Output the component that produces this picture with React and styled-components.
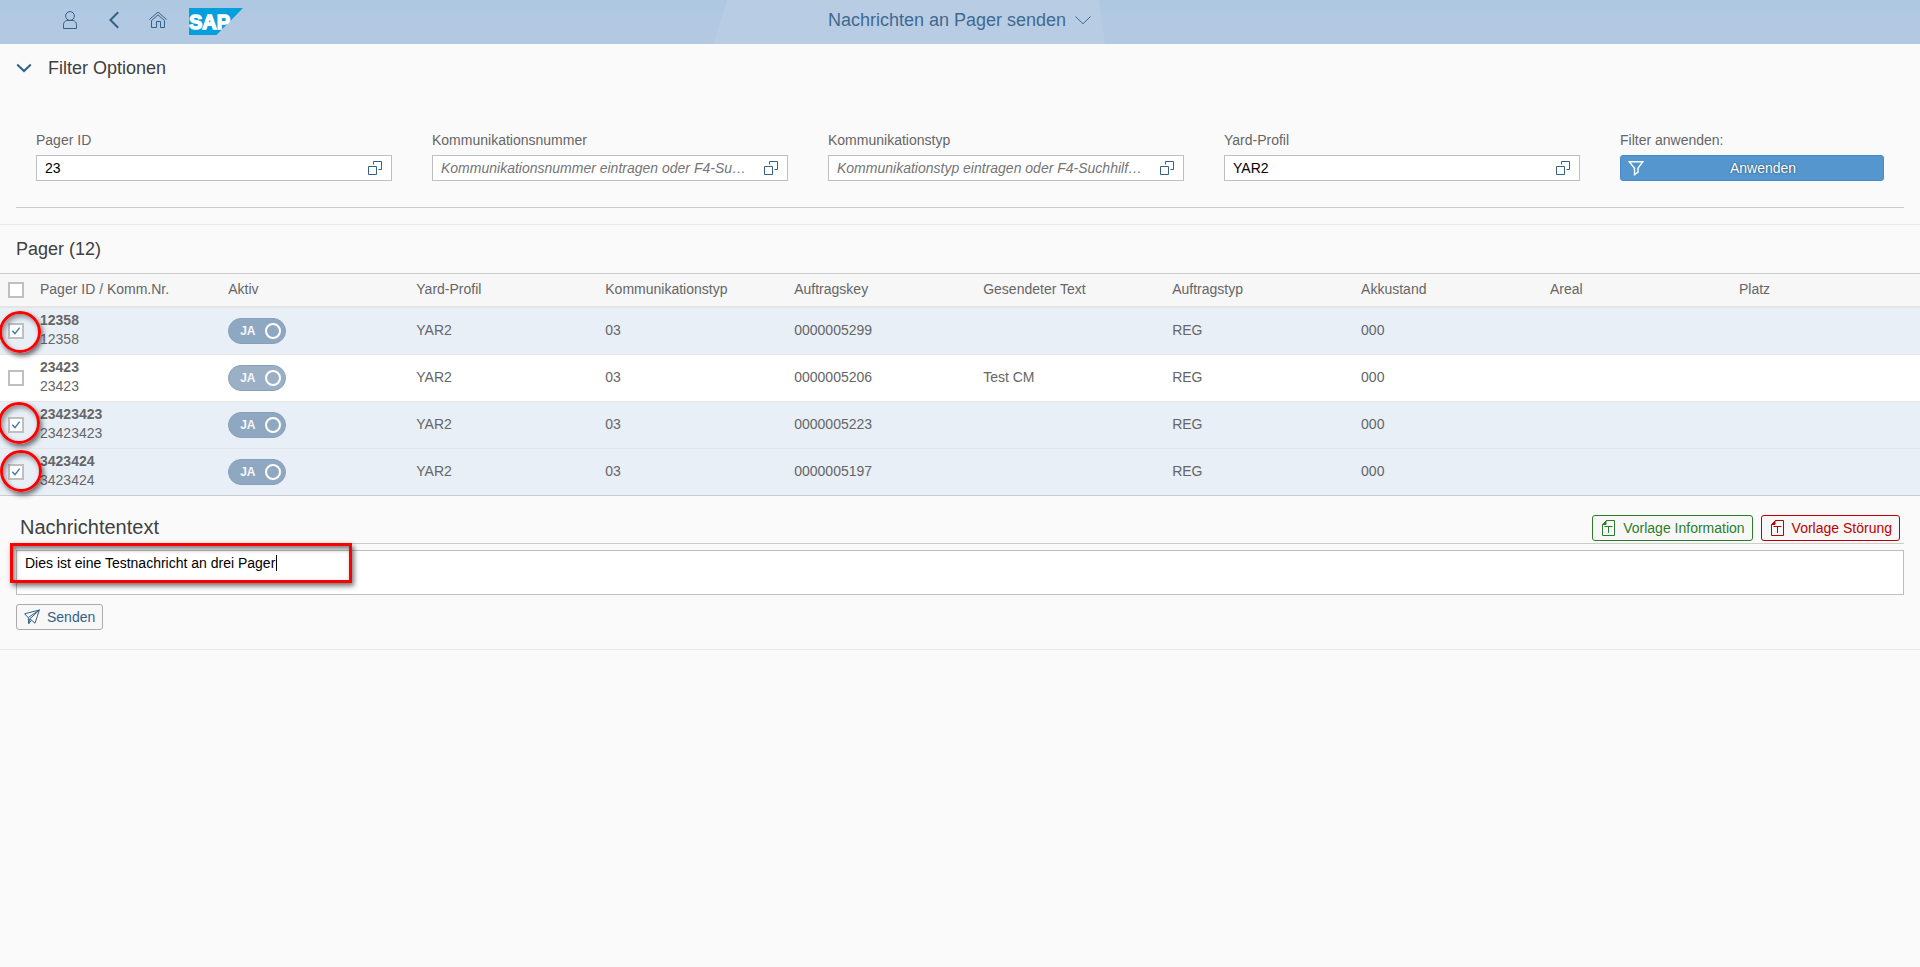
import React, { useState } from "react";
import styled, { createGlobalStyle } from "styled-components";

const GlobalStyle = createGlobalStyle`
  *, *::before, *::after { box-sizing: border-box; }
  html, body { margin: 0; background: #fafafa; }
  body { overflow-x: hidden; }
  body, button, input, textarea {
    font-family: "Liberation Sans", Arial, Helvetica, sans-serif;
    font-size: 14px;
  }
  h1, h2 { margin: 0; font-weight: 400; }
`;

const Page = styled.div`
  color: #666;
`;

/* ---------- shell bar ---------- */
const ShellBar = styled.header`
  position: relative;
  display: grid;
  grid-template-columns: 1fr auto 1fr;
  align-items: center;
  height: 44px;
  padding: 0 48px;
  background: linear-gradient(#aec8e2, #b3c9e2 60%);
`;

const ShellAccent = styled.div`
  position: absolute;
  top: 0;
  bottom: 0;
  left: 37.15%;
  width: 20.4%;
  background: #b8cde4;
  clip-path: polygon(14px 0, calc(100% - 6px) 0, 100% 100%, 0 100%);
`;

const ShellActions = styled.nav`
  display: flex;
  align-items: center;
`;

const ShellButton = styled.button`
  display: flex;
  align-items: center;
  justify-content: center;
  width: 44px;
  height: 44px;
  padding: 0 0 4px;
  border: 0;
  background: none;
  color: #346187;
`;

const LogoLink = styled.a`
  display: flex;
  margin: 0 0 1px 8px;
`;

const AppTitle = styled.button`
  position: relative;
  display: flex;
  align-items: center;
  gap: 8px;
  height: 44px;
  padding: 0 0 4px;
  border: 0;
  background: none;
  color: #3f6991;
`;

const AppTitleText = styled.h1`
  font-size: 18px;
  line-height: 24px;
`;

/* ---------- filter panel ---------- */
const FilterPanel = styled.section`
  padding-bottom: 16px;
  border-bottom: 1px solid #e8e8e8;
`;

const PanelHeader = styled.div`
  display: flex;
  align-items: center;
  height: 48px;
`;

const ExpandButton = styled.button`
  display: flex;
  align-items: center;
  justify-content: center;
  width: 48px;
  height: 48px;
  padding: 0;
  border: 0;
  background: none;
  color: #346187;
`;

const SectionTitle = styled.h2`
  font-size: ${(p) => (p.$large ? "20px" : "18px")};
  line-height: ${(p) => (p.$large ? "28px" : "24px")};
  color: #404040;
`;

const FilterGrid = styled.div`
  display: grid;
  grid-template-columns: repeat(4, minmax(0, 89fr)) minmax(0, 66fr);
  column-gap: 40px;
  margin: 0 16px;
  padding: 38px 20px 26px;
  border-bottom: 1px solid #ccc;
`;

const Field = styled.div`
  display: flex;
  flex-direction: column;
  gap: 5px;
`;

const FieldLabel = styled.label`
  line-height: 20px;
`;

const InputBox = styled.div`
  display: flex;
  height: 26px;
  border: 1px solid #bfbfbf;
  background: #fff;
`;

const TextInput = styled.input`
  flex: 1;
  min-width: 0;
  padding: 0 8px;
  border: 0;
  outline: 0;
  background: none;
  color: #000;
  text-overflow: ellipsis;

  &::placeholder {
    color: #757575;
    font-style: italic;
    opacity: 1;
  }
`;

const ValueHelpButton = styled.button`
  display: flex;
  align-items: center;
  justify-content: center;
  width: 32px;
  padding: 0;
  border: 0;
  background: none;
  color: #346187;
`;

const ApplyButton = styled.button`
  display: flex;
  align-items: center;
  height: 26px;
  padding: 0 8px 0 0;
  border: 1px solid #478bc9;
  border-radius: 3px;
  background: #5496cd;
  color: #fff;
  text-shadow: 0 0 2px rgba(0, 0, 0, 0.6);
`;

const ApplyIcon = styled.span`
  display: flex;
  justify-content: center;
  width: 30px;
`;

const ApplyText = styled.span`
  flex: 1;
  text-align: center;
`;

/* ---------- pager table ---------- */
const TableHeading = styled.div`
  display: flex;
  align-items: center;
  height: 48px;
  padding: 0 16px;
`;

const Table = styled.table`
  width: 100%;
  table-layout: fixed;
  border-spacing: 0;
  border-top: 1px solid #ccc;
`;

const HeadCell = styled.th`
  width: ${(p) => (p.$lead ? "9.8%" : "auto")};
  height: 34px;
  padding: 0 8px 2px;
  border-bottom: 2px solid #e5e5e5;
  background: #f7f7f7;
  font-weight: 400;
  text-align: left;
  white-space: nowrap;
`;

const SelectHeadCell = styled(HeadCell)`
  width: 32px;
  padding: 0 8px;
`;

const Row = styled.tr`
  background: ${(p) => (p.$selected ? "#e8eff7" : "#fff")};

  &:last-child > td { border-bottom-color: #ccc; }
`;

const Cell = styled.td`
  height: 47px;
  padding: 0 8px;
  border-bottom: 1px solid #e5e5e5;
`;

const TextCell = styled(Cell)`
  padding-bottom: 2px;
`;

const SelectCell = styled(Cell)`
  position: relative;
`;

const IdCell = styled(Cell)`
  padding: 3px 8px 5px;
  line-height: 19px;
`;

const IdLine = styled.div`
  font-weight: ${(p) => (p.$strong ? 700 : 400)};
`;

const CheckWrap = styled.span`
  display: grid;
  width: 16px;
  height: 16px;

  & > * { grid-area: 1 / 1; }
  & > svg { pointer-events: none; }
`;

const CheckInput = styled.input`
  appearance: none;
  width: 16px;
  height: 16px;
  margin: 0;
  border: 2px solid #bfbfbf;
  background: #fff;
`;

const Ring = styled.span`
  position: absolute;
  z-index: 1;
  left: ${(p) => p.$left}px;
  top: ${(p) => p.$top}px;
  width: 42px;
  height: 42px;
  border: 3px solid #f00;
  border-radius: 50%;
  box-shadow: 2px 3px 5px rgba(0, 0, 0, 0.55), inset 2px 3px 5px rgba(0, 0, 0, 0.4);
  pointer-events: none;
`;

const Switch = styled.label`
  display: flex;
  align-items: center;
  justify-content: space-between;
  width: 58px;
  height: 26px;
  padding: 0 4px 0 11px;
  border: 1px solid #88a1ba;
  border-radius: 13px;
  background: ${(p) => (p.$selected ? "#8fa8c1" : "#9bb0c4")};
  color: #f5f7fa;
  font-size: 12px;
  font-weight: 700;
`;

const SwitchInput = styled.input`
  appearance: none;
  width: 16px;
  height: 16px;
  margin: 0;
  border: 2px solid #fff;
  border-radius: 50%;
`;

/* ---------- message area ---------- */
const MessageSection = styled.section`
  padding: 0 16px 19px;
  border-bottom: 1px solid #e8e8e8;
`;

const MessageToolbar = styled.div`
  display: flex;
  align-items: flex-end;
  gap: 8px;
  height: 48px;
  padding: 0 4px 2px;
  border-bottom: 1px solid #ccc;
`;

const Spacer = styled.div`
  flex: 1;
`;

const tones = { plain: "#346187", positive: "#2b7d2b", negative: "#b00" };
const frames = { plain: "#ababab", positive: "#2b7d2b", negative: "#b00" };

const ActionButton = styled.button`
  display: flex;
  align-items: center;
  gap: 7px;
  height: 26px;
  padding: 0 7px;
  border: 1px solid ${(p) => frames[p.$tone]};
  border-radius: 3px;
  background: #f7f7f7;
  color: ${(p) => tones[p.$tone]};
`;

const MessageBox = styled.div`
  position: relative;
  display: flex;
  margin: 6px 0 9px;
`;

const MessageInput = styled.textarea`
  flex: 1;
  height: 45px;
  padding: 3px 8px;
  border: 1px solid #bfbfbf;
  outline: 0;
  background: #fff;
  color: #000;
  line-height: 18px;
  resize: none;
`;

const Highlight = styled.div`
  position: absolute;
  left: -6px;
  top: -7px;
  width: 342px;
  height: 40px;
  border: 3px solid #f00;
  box-shadow: 2px 3px 5px rgba(0, 0, 0, 0.55), inset 2px 3px 5px rgba(0, 0, 0, 0.5);
  pointer-events: none;
`;

const Caret = styled.span`
  position: absolute;
  left: 260px;
  top: 5px;
  width: 1px;
  height: 16px;
  background: #000;
`;

/* ---------- icons ---------- */
function Icon({ size = 16, width = 1, children }) {
  return (
    <svg
      width={size}
      height={size}
      viewBox={`0 0 ${size} ${size}`}
      fill="none"
      stroke="currentColor"
      strokeWidth={width}
      aria-hidden="true"
    >
      {children}
    </svg>
  );
}

const UserIcon = () => (
  <Icon size={18}>
    <circle cx="9" cy="5" r="4.4" />
    <path d="M5.8 9.500C3.6 10 2.500 11.600 2.500 13.800V17.500H15.500V13.800C15.500 11.600 14.400 10 12.200 9.500Z" />
  </Icon>
);

const BackIcon = () => (
  <Icon size={18} width={2}>
    <path d="M13.2 1.2L5.4 9L13.2 16.8" />
  </Icon>
);

const HomeIcon = () => (
  <Icon size={18}>
    <path d="M.4 8.6L9 1L17.6 8.6" />
    <path d="M2.5 9.6L9 3.9L15.5 9.6V16.5H11.5V10.5H7.5V16.5H2.5Z" />
  </Icon>
);

const SapLogo = () => (
  <svg width="55" height="27" viewBox="0 0 55 27" role="img" aria-label="SAP">
    <path d="M1 0H55L28.500 27H1Z" fill="#049fdc" />
    <text
      x="1"
      y="21"
      fill="#fff"
      stroke="#fff"
      strokeWidth="1.4"
      fontFamily="Liberation Sans, Arial, sans-serif"
      fontWeight="700"
      fontSize="20"
    >
      SAP
    </text>
  </svg>
);

const TitleArrow = () => (
  <Icon size={18}>
    <path d="M1.500 5.500L9 12.800L16.500 5.500" />
  </Icon>
);

const ExpandIcon = () => (
  <Icon size={16} width={2}>
    <path d="M1.200 4.500L8 11L14.800 4.500" />
  </Icon>
);

const ValueHelpIcon = () => (
  <Icon>
    <path d="M1.500 6.500H9.500V14.500H1.500Z" />
    <path d="M6.500 4.500V1.500H14.500V9.500H11.500" />
  </Icon>
);

const FunnelIcon = () => (
  <Icon width={1.4}>
    <path d="M1.200 1.700H14.800L10 8.200V12.200L6.500 14.600V8.200Z" />
  </Icon>
);

const TemplateIcon = () => (
  <Icon>
    <path d="M6 .5H14.500V15.500H2.500V4.500" />
    <path d="M2.500 4.500L6 1V4.500Z" fill="currentColor" />
    <path d="M4.500 6.500H12.500M8.500 6.500V13" />
  </Icon>
);

const SendIcon = () => (
  <Icon>
    <path d="M.6 4.800L15.400 1L11 14.200L7.600 11.200L4.800 14.600L4.200 8.600Z" />
    <path d="M4.200 8.600L15.400 1L5.600 10.200L4.800 14.600M5.600 10.200L7.600 11.200" />
  </Icon>
);

function CheckBox({ label, checked, onChange }) {
  return (
    <CheckWrap>
      <CheckInput type="checkbox" aria-label={label} checked={checked} onChange={onChange} />
      {checked && (
        <svg width="16" height="16" viewBox="0 0 16 16" fill="none" stroke="#427cac" strokeWidth="1.5" aria-hidden="true">
          <path d="M4.300 7.800L7 10.600L11.700 4.600" />
        </svg>
      )}
    </CheckWrap>
  );
}

/* ---------- data ---------- */
const filters = [
  { id: "pager", label: "Pager ID", value: "23" },
  { id: "number", label: "Kommunikationsnummer", placeholder: "Kommunikationsnummer eintragen oder F4-Suchhilfe nutzen" },
  { id: "type", label: "Kommunikationstyp", placeholder: "Kommunikationstyp eintragen oder F4-Suchhilfe nutzen" },
  { id: "yard", label: "Yard-Profil", value: "YAR2" },
];

const columns = [
  "Pager ID / Komm.Nr.",
  "Aktiv",
  "Yard-Profil",
  "Kommunikationstyp",
  "Auftragskey",
  "Gesendeter Text",
  "Auftragstyp",
  "Akkustand",
  "Areal",
  "Platz",
];

const pagers = [
  { id: "12358", key: "0000005299", text: "", ring: { left: -1, top: 3 } },
  { id: "23423", key: "0000005206", text: "Test CM" },
  { id: "23423423", key: "0000005223", text: "", ring: { left: -2, top: 0 } },
  { id: "3423424", key: "0000005197", text: "", ring: { left: 0, top: 1 } },
];

export default function App() {
  const [selected, setSelected] = useState(["12358", "23423423", "3423424"]);
  const toggle = (id) =>
    setSelected((ids) => (ids.includes(id) ? ids.filter((x) => x !== id) : [...ids, id]));

  return (
    <Page>
      <GlobalStyle />
      <ShellBar>
        <ShellAccent />
        <ShellActions>
          <ShellButton aria-label="Benutzer"><UserIcon /></ShellButton>
          <ShellButton aria-label="Zurück"><BackIcon /></ShellButton>
          <ShellButton aria-label="Startseite"><HomeIcon /></ShellButton>
          <LogoLink href="#"><SapLogo /></LogoLink>
        </ShellActions>
        <AppTitle>
          <AppTitleText>Nachrichten an Pager senden</AppTitleText>
          <TitleArrow />
        </AppTitle>
      </ShellBar>

      <main>
        <FilterPanel>
          <PanelHeader>
            <ExpandButton aria-label="Filter einklappen"><ExpandIcon /></ExpandButton>
            <SectionTitle>Filter Optionen</SectionTitle>
          </PanelHeader>
          <FilterGrid>
            {filters.map((f) => (
              <Field key={f.id}>
                <FieldLabel htmlFor={f.id}>{f.label}</FieldLabel>
                <InputBox>
                  <TextInput id={f.id} defaultValue={f.value} placeholder={f.placeholder} />
                  <ValueHelpButton aria-label={`Suchhilfe ${f.label}`}><ValueHelpIcon /></ValueHelpButton>
                </InputBox>
              </Field>
            ))}
            <Field>
              <FieldLabel htmlFor="apply">Filter anwenden:</FieldLabel>
              <ApplyButton id="apply">
                <ApplyIcon><FunnelIcon /></ApplyIcon>
                <ApplyText>Anwenden</ApplyText>
              </ApplyButton>
            </Field>
          </FilterGrid>
        </FilterPanel>

        <section>
          <TableHeading>
            <SectionTitle>Pager (12)</SectionTitle>
          </TableHeading>
          <Table>
            <thead>
              <tr>
                <SelectHeadCell>
                  <CheckBox
                    label="Alle auswählen"
                    checked={selected.length === pagers.length}
                    onChange={(e) => setSelected(e.target.checked ? pagers.map((p) => p.id) : [])}
                  />
                </SelectHeadCell>
                {columns.map((c, i) => <HeadCell key={c} $lead={i < 2}>{c}</HeadCell>)}
              </tr>
            </thead>
            <tbody>
              {pagers.map((p) => {
                const isSelected = selected.includes(p.id);
                return (
                  <Row key={p.id} $selected={isSelected}>
                    <SelectCell>
                      <CheckBox label={p.id} checked={isSelected} onChange={() => toggle(p.id)} />
                      {p.ring && <Ring $left={p.ring.left} $top={p.ring.top} />}
                    </SelectCell>
                    <IdCell>
                      <IdLine $strong>{p.id}</IdLine>
                      <IdLine>{p.id}</IdLine>
                    </IdCell>
                    <Cell>
                      <Switch $selected={isSelected}>
                        JA
                        <SwitchInput type="checkbox" role="switch" defaultChecked />
                      </Switch>
                    </Cell>
                    <TextCell>YAR2</TextCell>
                    <TextCell>03</TextCell>
                    <TextCell>{p.key}</TextCell>
                    <TextCell>{p.text}</TextCell>
                    <TextCell>REG</TextCell>
                    <TextCell>000</TextCell>
                    <TextCell />
                    <TextCell />
                  </Row>
                );
              })}
            </tbody>
          </Table>
        </section>

        <MessageSection>
          <MessageToolbar>
            <SectionTitle $large id="message-title">Nachrichtentext</SectionTitle>
            <Spacer />
            <ActionButton $tone="positive"><TemplateIcon />Vorlage Information</ActionButton>
            <ActionButton $tone="negative"><TemplateIcon />Vorlage Störung</ActionButton>
          </MessageToolbar>
          <MessageBox>
            <MessageInput
              aria-labelledby="message-title"
              defaultValue="Dies ist eine Testnachricht an drei Pager"
            />
            <Caret />
            <Highlight />
          </MessageBox>
          <ActionButton $tone="plain"><SendIcon />Senden</ActionButton>
        </MessageSection>
      </main>
    </Page>
  );
}
